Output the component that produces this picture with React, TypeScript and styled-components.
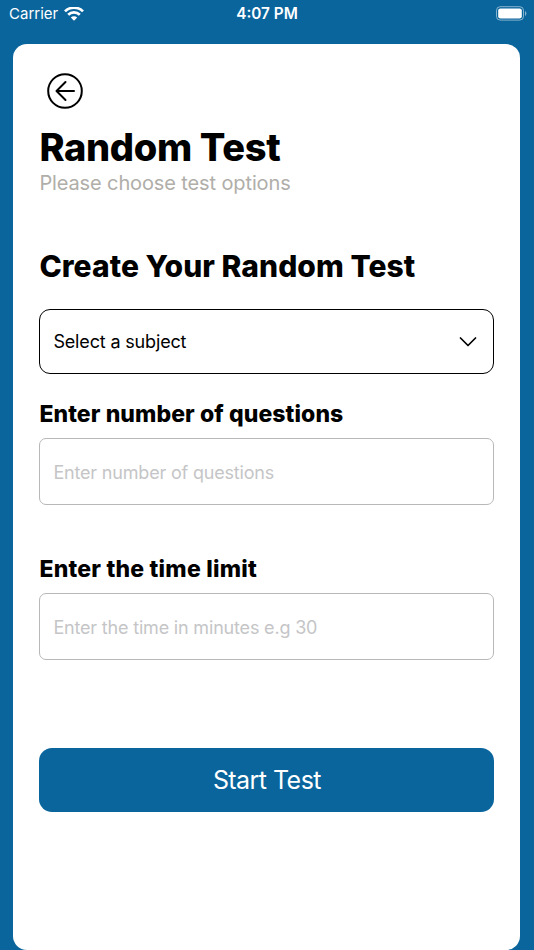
import React from 'react';
import styled, { createGlobalStyle } from 'styled-components';

const Global = createGlobalStyle`
  * { box-sizing: border-box; }
  body { margin: 0; background: #0a659d; font-family: Inter, sans-serif; color: #000; }
`;
const Screen = styled.div`
  height: 950px; display: flex; flex-direction: column; overflow: hidden; background: #0a659d;
`;
const StatusBar = styled.header`
  height: 28px; flex: none; padding: 0 7px 0 9px; color: #fff; font-size: 15px; line-height: 28px;
  display: grid; grid-template-columns: 1fr auto 1fr; align-items: center;
`;
const Carrier = styled.div`display: flex; align-items: center; gap: 6px;`;
const Clock = styled.div`font-weight: 600; font-size: 15.3px; padding-right: 2px;`;
const Battery = styled.div`display: flex; justify-content: flex-end; padding-bottom: 2px;`;
const Card = styled.main`
  flex: 1; margin: 16px 13.6px 0 13.4px; border-radius: 14px; background: #fff;
  padding: 29px 26px 0; display: flex; flex-direction: column;
`;
const BackButton = styled.button`
  width: 36px; height: 36px; margin: 0 0 0 7.6px; padding: 0; border: 0; background: none; display: block;
`;
const Line = styled.div<{ $size: number; $lh: number; $weight?: number; $top?: number; $color?: string; $track?: number }>`
  font-size: ${p => p.$size}px; line-height: ${p => p.$lh}px; font-weight: ${p => p.$weight ?? 400};
  margin: ${p => p.$top ?? 0}px 0 0; color: ${p => p.$color ?? '#000'};
  letter-spacing: ${p => p.$track ?? 0}px; white-space: nowrap;
`;
const Select = styled.button`
  height: 65px; margin: 25px 0 0; padding: 0 16.5px 0 13px; border: 1.3px solid #000; border-radius: 11px;
  background: #fff; font: 400 18px Inter, sans-serif; letter-spacing: -0.16px; color: #000;
  display: flex; align-items: center; justify-content: space-between;
`;
const Input = styled.input`
  height: 67px; margin: 10px 0 0; padding: 1px 13px 0; border: 1px solid #b8b8b8; border-radius: 7px;
  font: 400 18px Inter, sans-serif; letter-spacing: -0.18px; outline: 0;
  &::placeholder { color: #c5c5c7; opacity: 1; }
`;
const Start = styled.button`
  height: 64px; margin: 88px 0 0; border: 0; border-radius: 13px; background: #0a659d; color: #fff;
  font: 400 25px Inter, sans-serif; letter-spacing: -0.55px;
`;

export default function App() {
  return (
    <Screen>
      <Global />
      <StatusBar>
        <Carrier>Carrier
          <svg width="20" height="15" viewBox="0 0 20 15" fill="none" stroke="#fff" strokeWidth="2.7">
            <path d="M1 4.4a12.8 12.8 0 0 1 18 0M4.2 7.8a8.2 8.2 0 0 1 11.6 0" />
            <path d="M10 13.7 6.8 10.5a4.6 4.6 0 0 1 6.4 0z" fill="#fff" stroke="none" />
          </svg>
        </Carrier>
        <Clock>4:07 PM</Clock>
        <Battery>
          <svg width="31" height="15" viewBox="0 0 31 15">
            <rect x=".5" y=".7" width="27" height="13.4" rx="3.7" fill="none" stroke="#fff" strokeOpacity=".5" />
            <rect x="2.2" y="2.4" width="23.6" height="10" rx="2.2" fill="#fff" />
            <path d="M29 5v5c1.9-1 1.9-4 0-5z" fill="#fff" fillOpacity=".5" />
          </svg>
        </Battery>
      </StatusBar>
      <Card>
        <BackButton aria-label="Back">
          <svg width="36" height="36" viewBox="0 0 36 36" fill="none" stroke="#000" strokeWidth="2" strokeLinecap="round" strokeLinejoin="round">
            <circle cx="18" cy="18" r="16.8" /><path d="M27 18H10M18.5 9 9.5 18l9 9" />
          </svg>
        </BackButton>
        <Line as="h1" $size={38} $lh={46} $weight={800} $top={15} $track={-0.33}>Random Test</Line>
        <Line $size={20} $lh={26} $color="#b0aea9" $track={-0.12}>Please choose test options</Line>
        <Line as="h2" $size={30} $lh={36} $weight={800} $top={52} $track={0.06}>Create Your Random Test</Line>
        <Select>Select a subject
          <svg width="18" height="10" viewBox="0 0 18 10" fill="none" stroke="#000" strokeWidth="1.7" strokeLinecap="round" strokeLinejoin="round"><path d="m1.5 1 7.5 7.5L16.5 1" /></svg>
        </Select>
        <Line as="label" $size={23} $lh={28} $weight={800} $top={26} $track={0.09}>Enter number of questions</Line>
        <Input placeholder="Enter number of questions" />
        <Line as="label" $size={23} $lh={28} $weight={800} $top={50} $track={0.22}>Enter the time limit</Line>
        <Input placeholder="Enter the time in minutes e.g 30" />
        <Start>Start Test</Start>
      </Card>
    </Screen>
  );
}
